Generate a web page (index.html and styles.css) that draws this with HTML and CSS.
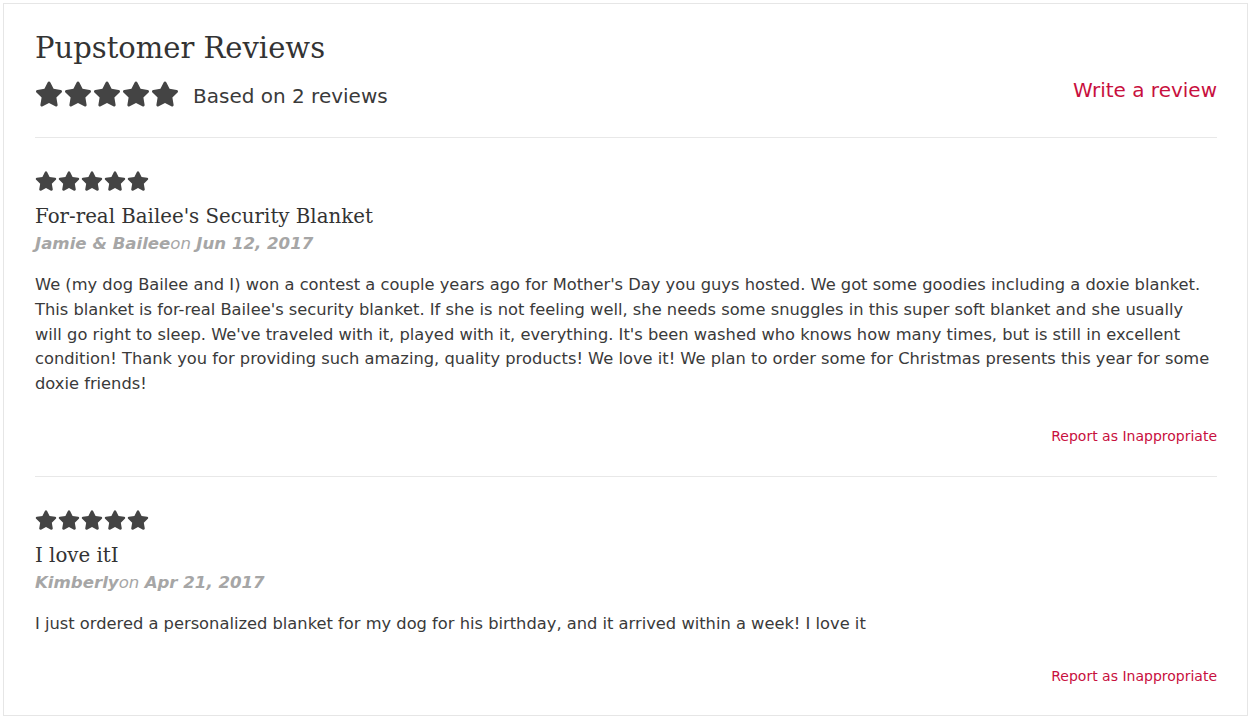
FILE: index.html
```html
<!DOCTYPE html>
<html lang="en">
<head>
<meta charset="utf-8">
<title>Pupstomer Reviews</title>
<link rel="stylesheet" href="styles.css">
</head>
<body>
<svg class="defs" width="0" height="0" aria-hidden="true">
  <symbol id="star" viewBox="0 0 576 512">
    <path d="M259.3 17.8L194 150.2 47.9 171.5c-26.2 3.8-36.7 36.1-17.7 54.6l105.7 103-25 145.5c-4.5 26.3 23.2 46 46.4 33.7L288 439.6l130.7 68.7c23.2 12.2 50.9-7.4 46.4-33.7l-25-145.5 105.7-103c19-18.5 8.5-50.8-17.7-54.6L382 150.2 316.7 17.8c-11.7-23.6-45.6-23.9-57.4 0z"/>
  </symbol>
</svg>
<div class="reviews">
  <header class="summary">
    <h2 class="title">Pupstomer Reviews</h2>
    <div class="summary-row">
      <div class="summary-left">
        <span class="stars stars-lg">
          <svg><use href="#star"/></svg><svg><use href="#star"/></svg><svg><use href="#star"/></svg><svg><use href="#star"/></svg><svg><use href="#star"/></svg>
        </span>
        <span class="based">Based on 2 reviews</span>
      </div>
      <a class="write" href="#">Write a review</a>
    </div>
  </header>

  <article class="review">
    <span class="stars stars-sm">
      <svg><use href="#star"/></svg><svg><use href="#star"/></svg><svg><use href="#star"/></svg><svg><use href="#star"/></svg><svg><use href="#star"/></svg>
    </span>
    <h3 class="review-title">For-real Bailee's Security Blanket</h3>
    <div class="meta"><strong>Jamie &amp; Bailee</strong>on <strong>Jun 12, 2017</strong></div>
    <p class="body">We (my dog Bailee and I) won a contest a couple years ago for Mother's Day you guys hosted. We got some goodies including a doxie blanket. This blanket is for-real Bailee's security blanket. If she is not feeling well, she needs some snuggles in this super soft blanket and she usually will go right to sleep. We've traveled with it, played with it, everything. It's been washed who knows how many times, but is still in excellent condition! Thank you for providing such amazing, quality products! We love it! We plan to order some for Christmas presents this year for some doxie friends!</p>
    <div class="report"><a href="#">Report as Inappropriate</a></div>
  </article>

  <article class="review">
    <span class="stars stars-sm">
      <svg><use href="#star"/></svg><svg><use href="#star"/></svg><svg><use href="#star"/></svg><svg><use href="#star"/></svg><svg><use href="#star"/></svg>
    </span>
    <h3 class="review-title">I love itI</h3>
    <div class="meta"><strong>Kimberly</strong>on <strong>Apr 21, 2017</strong></div>
    <p class="body">I just ordered a personalized blanket for my dog for his birthday, and it arrived within a week! I love it</p>
    <div class="report"><a href="#">Report as Inappropriate</a></div>
  </article>
</div>
</body>
</html>
```

FILE: styles.css
```css
html, body {
  margin: 0;
  padding: 0;
  background: #ffffff;
}

body {
  padding: 3px 3px 0 3px;
  font-family: "DejaVu Sans", Verdana, sans-serif;
  color: #3a3a3a;
}

.defs {
  position: absolute;
  width: 0;
  height: 0;
  overflow: hidden;
}

.reviews {
  width: 1182px;
  border: 1px solid #e6e6e6;
  padding: 0 30px 0 31px;
}

.summary {
  padding-top: 26px;
  padding-bottom: 25px;
  border-bottom: 1px solid #e8e8e8;
}

.title {
  margin: 0;
  font-family: "DejaVu Serif", Georgia, serif;
  font-weight: normal;
  font-size: 29px;
  line-height: 36px;
  color: #333333;
}

.summary-row {
  margin-top: 10px;
  display: flex;
  align-items: center;
  justify-content: space-between;
}

.summary-left {
  display: flex;
  align-items: center;
}

.stars {
  display: flex;
  color: #444444;
}

.stars svg {
  fill: currentColor;
  display: block;
}

.stars-lg svg {
  width: 28px;
  height: 28px;
  margin-right: 1px;
}

.based {
  margin-left: 13px;
  font-size: 20px;
  line-height: 28px;
  color: #3a3a3a;
  position: relative;
  top: 2px;
}

.write {
  font-size: 20px;
  line-height: 28px;
  color: #c8103e;
  text-decoration: none;
  margin-bottom: 8px;
}

.review {
  padding-top: 32px;
  padding-bottom: 30px;
  border-bottom: 1px solid #e8e8e8;
}

.review:last-child {
  border-bottom: none;
  padding-bottom: 29px;
}

.stars-sm svg {
  width: 22px;
  height: 22px;
  margin-right: 1px;
}

.review-title {
  margin: 11px 0 0 0;
  font-family: "DejaVu Serif", Georgia, serif;
  font-weight: normal;
  font-size: 19.8px;
  line-height: 28px;
  color: #333333;
}

.meta {
  margin-top: 3px;
  font-size: 16.6px;
  line-height: 20px;
  font-style: italic;
  color: #a6a6a6;
}

.meta strong {
  font-weight: bold;
}

.body {
  margin: 19px 0 0 0;
  max-width: 1177px;
  font-size: 16.3px;
  line-height: 24.8px;
  color: #3a3a3a;
}

.report {
  margin-top: 29px;
  text-align: right;
  font-size: 14px;
  line-height: 20px;
}

.report a {
  color: #c8103e;
  text-decoration: none;
}
```
